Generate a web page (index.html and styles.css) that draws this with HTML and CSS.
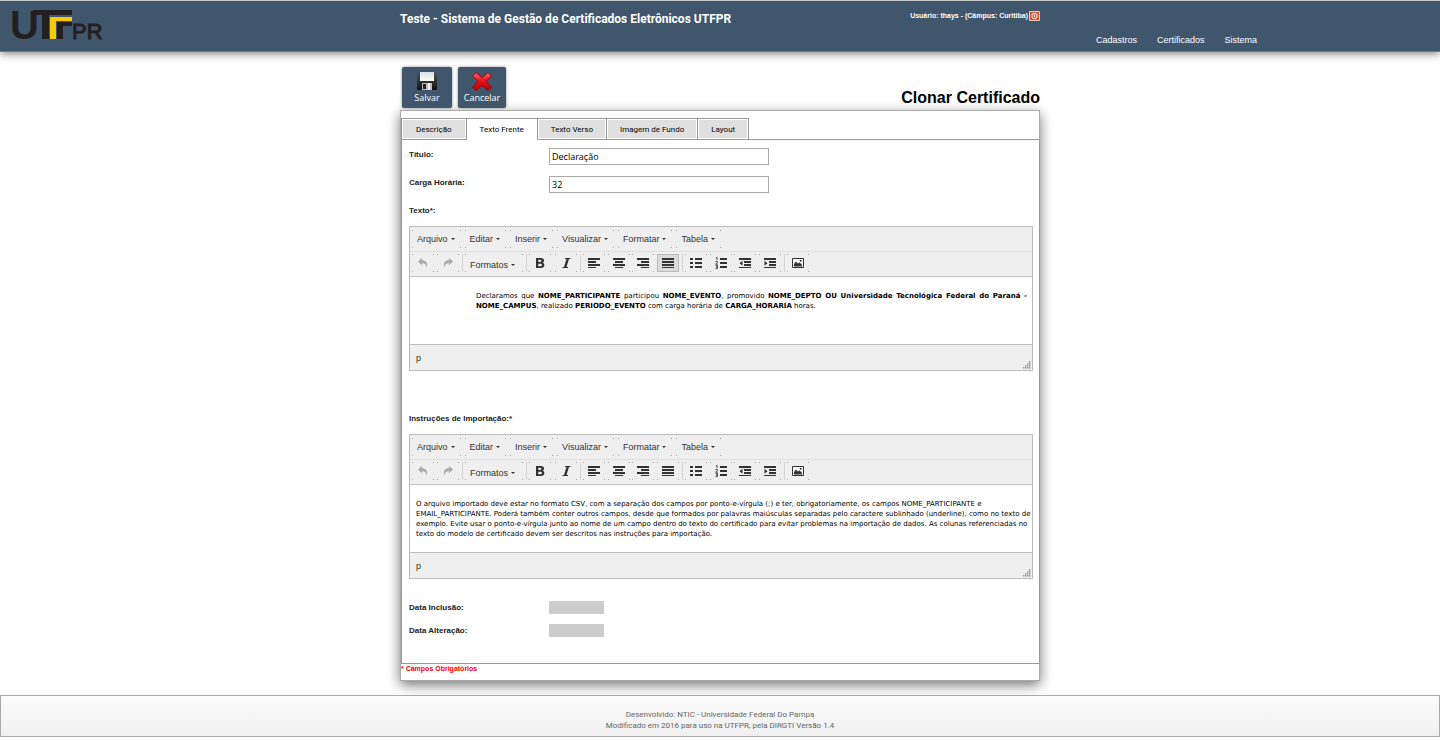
FILE: index.html
```html
<!DOCTYPE html>
<html lang="pt-BR">
<head>
<meta charset="utf-8">
<title>Clonar Certificado</title>
<link rel="stylesheet" href="styles.css">
</head>
<body>
<svg class="sprite" width="0" height="0" aria-hidden="true">
  <symbol id="undo" viewBox="0 0 12 12"><path d="M1 4.500L5 1v2.200c4 0 6 2.200 4.600 7.300C9.300 7.500 8 6.200 5 6.200V8.200z" fill="#aaa"/></symbol>
  <symbol id="redo" viewBox="0 0 12 12"><path d="M11 4.500L7 1v2.200c-4 0-6 2.200-4.600 7.300C2.700 7.500 4 6.200 7 6.200V8.200z" fill="#aaa"/></symbol>
  <symbol id="bold" viewBox="0 0 12 12"><path fill-rule="evenodd" d="M2 1h5c2 0 3 1 3 2.500 0 1-.5 1.700-1.300 2.100C9.700 6 10.300 6.800 10.300 8c0 1.800-1.300 3-3.300 3H2zM4.300 2.700v2.200h1.900c1.700 0 1.700-2.200 0-2.200zM4.300 6.700v2.500h2.200c1.900 0 1.900-2.500 0-2.500z" fill="#333"/></symbol>
  <symbol id="italic" viewBox="0 0 12 12"><path d="M5 1h5.500v1H9L6.500 10H8v1H2.500v-1H4L6.500 2H5z" fill="#333"/></symbol>
  <symbol id="left" viewBox="0 0 12 12"><path d="M0 1h12v2H0zM0 4h8v2H0zM0 7h12v2H0zM0 10h8v1H0z" fill="#333"/></symbol>
  <symbol id="center" viewBox="0 0 12 12"><path d="M0 1h12v2H0zM2 4h8v2H2zM0 7h12v2H0zM2 10h8v1H2z" fill="#333"/></symbol>
  <symbol id="right" viewBox="0 0 12 12"><path d="M0 1h12v2H0zM4 4h8v2H4zM0 7h12v2H0zM4 10h8v1H4z" fill="#333"/></symbol>
  <symbol id="justify" viewBox="0 0 12 12"><path d="M0 1h12v2H0zM0 4h12v2H0zM0 7h12v2H0zM0 10h12v1H0z" fill="#333"/></symbol>
  <symbol id="bullets" viewBox="0 0 12 12"><path d="M0 1h3v2H0zM0 5h3v2H0zM0 9h3v2H0zM5 1h7v2H5zM5 5h7v2H5zM5 9h7v2H5z" fill="#333"/></symbol>
  <symbol id="numbers" viewBox="0 0 12 12"><path d="M5 1h7v2H5zM5 5h7v2H5zM5 9h7v2H5z" fill="#333"/><path d="M1 .5h1V3M.5 4.500H2.500V5.500L.8 7.300h2M.5 8.700h2v2.700h-2M1 10h1.500" fill="none" stroke="#333" stroke-width=".9"/></symbol>
  <symbol id="outdent" viewBox="0 0 12 12"><path d="M0 1h12v2H0zM5 4h7v2H5zM5 7h7v2H5zM0 10h12v1H0zM3.500 3.800v5l-3-2.500z" fill="#333"/></symbol>
  <symbol id="indent" viewBox="0 0 12 12"><path d="M0 1h12v2H0zM5 4h7v2H5zM5 7h7v2H5zM0 10h12v1H0zM.5 3.800v5l3-2.500z" fill="#333"/></symbol>
  <symbol id="image" viewBox="0 0 12 12"><path d="M.5 1.500h11v9H.5z" fill="#fff" stroke="#333"/><path d="M2 9.500V7l2-2.500 2 2 1.500-1.300L10 8v1.500z" fill="#333"/><circle cx="8.700" cy="3.700" r="1" fill="#333"/></symbol>
  <symbol id="grip" viewBox="0 0 8 8"><path d="M6 0h1.500v1.500H6zM4 2h1.500v1.500H4zM6 2h1.500v1.500H6zM2 4h1.500v1.500H2zM4 4h1.500v1.500H4zM6 4h1.500v1.500H6zM0 6h1.500v1.500H0zM2 6h1.500v1.500H2zM4 6h1.500v1.500H4zM6 6h1.500v1.500H6z" fill="#999"/></symbol>
</svg>

<header class="topbar">
  <a class="logo" href="#" aria-label="UTFPR">
    <svg width="94" height="34" viewBox="0 0 94 34">
      <text x="-1" y="30" class="logo-u">U</text>
      <path d="M22 1h39v5H38v24h-7V6h-9z" fill="#231f20"/>
      <path d="M39 8h22v4H45v18h-6z" fill="#f6cc00"/>
      <path d="M46 13h15v4h-9v13h-6z" fill="#231f20"/>
      <text x="61" y="30" class="logo-pr">PR</text>
    </svg>
  </a>
  <div class="topbar-main">
    <strong class="system">Teste - Sistema de Gestão de Certificados Eletrônicos UTFPR</strong>
    <span class="user">Usuário: thays - (Câmpus: Curitiba)
      <button class="logout" type="button" aria-label="Sair">
        <svg width="11" height="10" viewBox="0 0 11 10"><path d="M.5.5h10v9H.5z" fill="#e2532d" stroke="#f7c5b2"/><circle cx="5.500" cy="5" r="2.700" fill="none" stroke="#fff"/><path d="M5.500 3.500v2.500" stroke="#fff"/></svg>
      </button>
    </span>
  </div>
  <nav class="nav"><a href="#">Cadastros</a><a href="#">Certificados</a><a href="#">Sistema</a></nav>
</header>

<main class="page">
  <div class="actions">
    <button class="action action-save" type="button">
      <svg width="22" height="21" viewBox="0 0 22 21">
        <defs><linearGradient id="disk" x2="0" y2="1"><stop stop-color="#555"/><stop offset="1" stop-color="#111"/></linearGradient>
        <linearGradient id="paper" x2="0" y2="1"><stop stop-color="#d7e0ea"/><stop offset="1" stop-color="#fff"/></linearGradient></defs>
        <rect x="1" y="0" width="20" height="19" rx="1" fill="url(#disk)"/><path d="M4 1h14v9H4z" fill="url(#paper)"/><path d="M6 12h10v7H6z" fill="#bbb"/><path d="M7 13h3v5H7z" fill="#222"/><path d="M12 12h2v7h-2z" fill="#eee"/>
      </svg>Salvar</button>
    <button class="action action-cancel" type="button">
      <svg width="22" height="21" viewBox="0 0 22 21">
        <defs><linearGradient id="red" x2="0" y2="1"><stop stop-color="#ff6a6a"/><stop offset=".45" stop-color="#e8121a"/><stop offset="1" stop-color="#b80008"/></linearGradient></defs>
        <path d="M5 1.500L11 6.500 17 1.500 20.500 5 15 10.500 20.500 16 17 19.500 11 14.500 5 19.500 1.500 16 7 10.500 1.500 5z" fill="url(#red)" stroke="#9c0008" stroke-linejoin="round"/>
      </svg>Cancelar</button>
    <h1 class="title">Clonar Certificado</h1>
  </div>

  <form class="panel">
    <div class="tabs" role="tablist">
      <button class="tab" type="button" role="tab">Descrição</button>
      <button class="tab tab-active" type="button" role="tab" aria-selected="true">Texto Frente</button>
      <button class="tab" type="button" role="tab">Texto Verso</button>
      <button class="tab" type="button" role="tab">Imagem de Fundo</button>
      <button class="tab" type="button" role="tab">Layout</button>
    </div>
    <div class="content">
      <div class="row"><label class="label" for="titulo">Título:</label><input class="field" id="titulo" type="text" value="Declaração"></div>
      <div class="row"><label class="label" for="carga">Carga Horária:</label><input class="field" id="carga" type="text" value="32"></div>
      <div class="row"><span class="label">Texto*:</span></div>

      <section class="editor" aria-label="Texto">
        <div class="menubar">
          <button class="menu" type="button">Arquivo<i class="caret"></i></button><button class="menu" type="button">Editar<i class="caret"></i></button><button class="menu" type="button">Inserir<i class="caret"></i></button><button class="menu" type="button">Visualizar<i class="caret"></i></button><button class="menu" type="button">Formatar<i class="caret"></i></button><button class="menu" type="button">Tabela<i class="caret"></i></button>
        </div>
        <div class="toolbar">
          <div class="group pair"><button class="tool" type="button" aria-label="Desfazer"><svg class="icon"><use href="#undo"/></svg></button><button class="tool" type="button" aria-label="Refazer"><svg class="icon"><use href="#redo"/></svg></button></div>
          <div class="group"><button class="menu formats" type="button">Formatos<i class="caret"></i></button></div>
          <div class="group pair"><button class="tool" type="button" aria-label="Negrito"><svg class="icon"><use href="#bold"/></svg></button><button class="tool" type="button" aria-label="Itálico"><svg class="icon"><use href="#italic"/></svg></button></div>
          <div class="group four"><button class="tool" type="button" aria-label="Alinhar à esquerda"><svg class="icon"><use href="#left"/></svg></button><button class="tool" type="button" aria-label="Centralizar"><svg class="icon"><use href="#center"/></svg></button><button class="tool" type="button" aria-label="Alinhar à direita"><svg class="icon"><use href="#right"/></svg></button><button class="tool tool-on" type="button" aria-label="Justificar"><svg class="icon"><use href="#justify"/></svg></button></div>
          <div class="group four"><button class="tool" type="button" aria-label="Marcadores"><svg class="icon"><use href="#bullets"/></svg></button><button class="tool" type="button" aria-label="Numeração"><svg class="icon"><use href="#numbers"/></svg></button><button class="tool" type="button" aria-label="Diminuir recuo"><svg class="icon"><use href="#outdent"/></svg></button><button class="tool" type="button" aria-label="Aumentar recuo"><svg class="icon"><use href="#indent"/></svg></button></div>
          <div class="group"><button class="tool" type="button" aria-label="Imagem"><svg class="icon"><use href="#image"/></svg></button></div>
        </div>
        <div class="text" contenteditable="true">
          <p class="indented">Declaramos que <b>NOME_PARTICIPANTE</b> participou <b>NOME_EVENTO</b>, promovido <b>NOME_DEPTO OU Universidade Tecnológica Federal do Paraná - NOME_CAMPUS</b>, realizado <b>PERIODO_EVENTO</b> com carga horária de <b>CARGA_HORARIA</b> horas.</p>
        </div>
        <div class="status"><span>p</span><svg class="grip"><use href="#grip"/></svg></div>
      </section>

      <div class="row row-second"><span class="label">Instruções de Importação:*</span></div>

      <section class="editor" aria-label="Instruções de Importação">
        <div class="menubar">
          <button class="menu" type="button">Arquivo<i class="caret"></i></button><button class="menu" type="button">Editar<i class="caret"></i></button><button class="menu" type="button">Inserir<i class="caret"></i></button><button class="menu" type="button">Visualizar<i class="caret"></i></button><button class="menu" type="button">Formatar<i class="caret"></i></button><button class="menu" type="button">Tabela<i class="caret"></i></button>
        </div>
        <div class="toolbar">
          <div class="group pair"><button class="tool" type="button" aria-label="Desfazer"><svg class="icon"><use href="#undo"/></svg></button><button class="tool" type="button" aria-label="Refazer"><svg class="icon"><use href="#redo"/></svg></button></div>
          <div class="group"><button class="menu formats" type="button">Formatos<i class="caret"></i></button></div>
          <div class="group pair"><button class="tool" type="button" aria-label="Negrito"><svg class="icon"><use href="#bold"/></svg></button><button class="tool" type="button" aria-label="Itálico"><svg class="icon"><use href="#italic"/></svg></button></div>
          <div class="group four"><button class="tool" type="button" aria-label="Alinhar à esquerda"><svg class="icon"><use href="#left"/></svg></button><button class="tool" type="button" aria-label="Centralizar"><svg class="icon"><use href="#center"/></svg></button><button class="tool" type="button" aria-label="Alinhar à direita"><svg class="icon"><use href="#right"/></svg></button><button class="tool" type="button" aria-label="Justificar"><svg class="icon"><use href="#justify"/></svg></button></div>
          <div class="group four"><button class="tool" type="button" aria-label="Marcadores"><svg class="icon"><use href="#bullets"/></svg></button><button class="tool" type="button" aria-label="Numeração"><svg class="icon"><use href="#numbers"/></svg></button><button class="tool" type="button" aria-label="Diminuir recuo"><svg class="icon"><use href="#outdent"/></svg></button><button class="tool" type="button" aria-label="Aumentar recuo"><svg class="icon"><use href="#indent"/></svg></button></div>
          <div class="group"><button class="tool" type="button" aria-label="Imagem"><svg class="icon"><use href="#image"/></svg></button></div>
        </div>
        <div class="text text-wide" contenteditable="true">
          <p>O arquivo importado deve estar no formato CSV, com a separação dos campos por ponto-e-vírgula (;) e ter, obrigatoriamente, os campos NOME_PARTICIPANTE e EMAIL_PARTICIPANTE. Poderá também conter outros campos, desde que formados por palavras maiúsculas separadas pelo caractere sublinhado (underline), como no texto de exemplo. Evite usar o ponto-e-vírgula junto ao nome de um campo dentro do texto do certificado para evitar problemas na importação de dados. As colunas referenciadas no texto do modelo de certificado devem ser descritos nas instruções para importação.</p>
        </div>
        <div class="status"><span>p</span><svg class="grip"><use href="#grip"/></svg></div>
      </section>

      <div class="dates">
        <div class="date"><label class="label" for="inclusao">Data Inclusão:</label><input class="readonly" id="inclusao" type="text" disabled></div>
        <div class="date"><label class="label" for="alteracao">Data Alteração:</label><input class="readonly" id="alteracao" type="text" disabled></div>
      </div>
    </div>
    <p class="required">* Campos Obrigatórios</p>
  </form>
</main>

<footer class="footer">Desenvolvido: NTIC - Universidade Federal Do Pampa<br>Modificado em 2016 para uso na UTFPR, pela DIRGTI Versão 1.4</footer>
</body>
</html>
```
FILE: styles.css
```css
* { box-sizing: border-box; }

body {
  margin: 0;
  background: #fff;
  color: #222;
  font: 8px/10px "Liberation Sans", Arial, sans-serif;
}

button, input { font: inherit; color: inherit; }
button { margin: 0; padding: 0; border: 0; background: none; cursor: pointer; }
a { color: inherit; text-decoration: none; }
.sprite { display: none; }

.topbar {
  display: grid;
  grid-template-columns: 1fr 640px 1fr;
  height: 52px;
  border-top: 1px solid #c4c8ca;
  border-bottom: 1px solid #777;
  background: #40566d;
  color: #fff;
  box-shadow: 0 2px 8px #888;
}
.logo { padding: 8px 0 0 11px; }
.logo svg { overflow: visible; }
.logo-u { font: bold 40px "Liberation Sans", Arial, sans-serif; fill: #231f20; }
.logo-pr { font: 22px "Liberation Sans", Arial, sans-serif; fill: #231f20; stroke: #231f20; stroke-width: 1px; }
.topbar-main { display: flex; justify-content: space-between; align-items: flex-start; padding-top: 10px; }
.system { font: bold 12px/16px Roboto, "Liberation Sans", sans-serif; }
.user { display: flex; align-items: center; gap: 1px; font-size: 7px; font-weight: bold; }
.logout, .logout svg { display: block; }
.nav { display: flex; align-items: flex-end; gap: 20px; padding: 0 0 5px 56px; font-size: 9px; line-height: 12px; }

.page { width: 640px; margin: 15px auto 14px; }
.actions { display: flex; align-items: flex-start; gap: 6px; padding: 0 0 2px 2px; }
.action {
  display: flex;
  flex-direction: column;
  align-items: center;
  height: 41px;
  padding-top: 4px;
  border-radius: 2px;
  background: #40566d;
  box-shadow: 0 0 3px #888;
  color: #fff;
  font: 9px/12px "Open Sans", "DejaVu Sans", sans-serif;
}
.action-save { width: 50px; }
.action-cancel { width: 48px; }
.title { margin: 21px 0 0 auto; color: #000; font-size: 16px; line-height: 20px; }

.panel {
  border: 1px solid #aaa;
  background: #fff;
  box-shadow: 0 4px 12px #777;
}
.tabs { display: flex; padding-top: 7px; }
.tabs::after { content: ""; flex: 1; border-bottom: 1px solid #999; }
.tab {
  height: 22px;
  padding: 2px 13px 0;
  border: 1px solid #999;
  border-left-width: 0;
  background: #e0e0e0;
  box-shadow: inset 0 0 0 1px #fff;
  color: #000;
  font-family: Roboto, "Liberation Sans", sans-serif;
}
.tab:first-child { padding: 2px 14px 0; border-left-width: 1px; }
.tab-active { border-bottom-color: #fff; background: #fff; }
.content { margin-right: -1px; padding: 8px 6px 27px 7px; border: 1px solid #999; border-top: 0; }
.row { display: flex; height: 28px; }
.label { width: 140px; padding-top: 2px; font-weight: bold; white-space: nowrap; }
.field {
  width: 220px;
  height: 17px;
  padding: 0 2px;
  border: 1px solid #aaa;
  background: #fff;
  color: #000;
  font: 9px/13px "Open Sans", "DejaVu Sans", sans-serif;
}
.row:nth-child(3) { height: 22px; }
.row-second { height: 63px; padding-top: 41px; }

.editor { border: 1px solid #bbb; background: #efefef; color: #333; font-size: 9px; }
.menubar { display: flex; gap: 4px; height: 25px; padding: 3px 2px; border-bottom: 1px solid #e0e0e0; }
.menu, .tool {
  --dot: linear-gradient(#aaa, #aaa);
  background:
    var(--dot) 0 0 / 1px 1px no-repeat,
    var(--dot) 100% 0 / 1px 1px no-repeat,
    var(--dot) 0 100% / 1px 1px no-repeat,
    var(--dot) 100% 100% / 1px 1px no-repeat;
}
.menu { display: flex; align-items: center; gap: 3px; height: 18px; padding: 0 6px 0 5px; }
.caret { border: 2px solid transparent; border-top-color: #333; border-bottom: 0; }
.toolbar { display: flex; align-items: center; gap: 3px; height: 25px; padding: 0 2px 2px; border-bottom: 1px solid #c4c4c4; }
.group { display: flex; justify-content: space-between; height: 18px; }
.group + .group { padding-left: 2px; border-left: 1px solid #d4d4d4; }
.group .formats { padding: 3px 8px 0 5px; }
.pair { width: 47px; }
.group + .pair { width: 51px; }
.four { width: 99px; }
.tool { display: grid; place-items: center; width: 22px; height: 18px; }
.tool-on { border: 1px solid #bbb; background: #dcdcdc; }
.icon { width: 12px; height: 12px; }
.text { min-height: 67px; padding: 14px 5px 12px 6px; background: #fff; color: #000; font: 7px/10px "DejaVu Sans", Verdana, sans-serif; }
.text-wide { padding-right: 1px; }
.text p { margin: 0; }
.text .indented { margin-left: 60px; text-align: justify; }
.status { display: flex; justify-content: space-between; align-items: center; height: 26px; padding: 0 1px 0 6px; border-top: 1px solid #bbb; }
.grip { align-self: flex-end; width: 8px; height: 8px; margin-bottom: 1px; }

.dates { display: grid; gap: 11px; padding-top: 22px; }
.date { display: flex; height: 12px; }
.readonly { width: 55px; height: 13px; padding: 0; border: 0; background: #ccc; }
.required { margin: 0; padding-bottom: 6px; color: #f00; font-size: 7px; font-weight: bold; }

.footer {
  padding: 13px 0 5px;
  border: 1px solid #aaa;
  background: linear-gradient(#fcfcfc, #f0f0f0);
  color: #666;
  font-family: Roboto, "Liberation Sans", sans-serif;
  font-size: 8px;
  line-height: 11px;
  text-align: center;
}
```
